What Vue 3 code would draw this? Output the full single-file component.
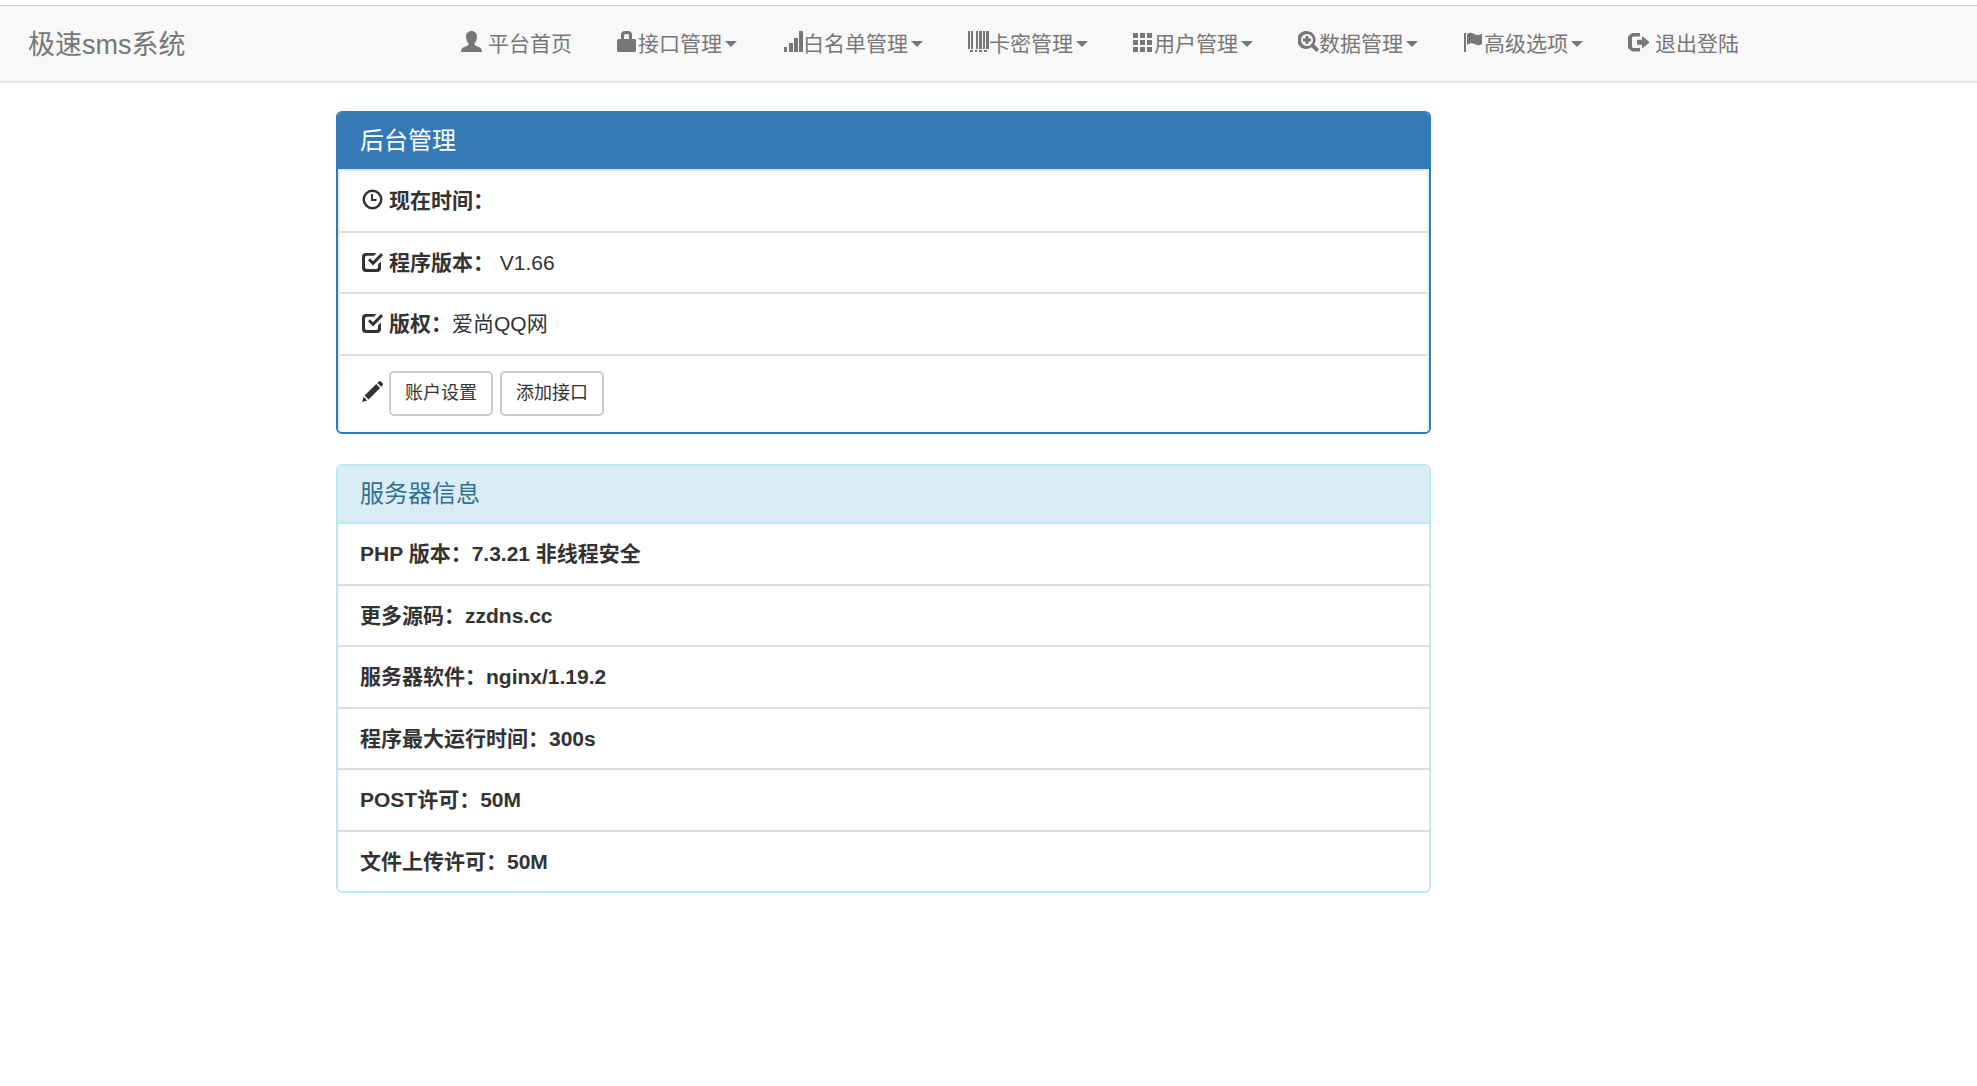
<template>
  <div class="page">
    <!-- ===== Navbar ===== -->
    <header class="navbar">
      <a class="brand" href="#">极速sms系统</a>
      <nav>
        <ul class="nav">
          <li v-for="item in menu" :key="item.label">
            <a href="#" :class="{ spaced: !item.dropdown }">
              <svg class="icon" viewBox="0 0 21 21" aria-hidden="true"><path :d="icons[item.icon]" /></svg>
              <span>{{ item.label }}</span>
              <i v-if="item.dropdown" class="caret"></i>
            </a>
          </li>
        </ul>
      </nav>
    </header>

    <main class="content">
      <!-- ===== 后台管理 ===== -->
      <section class="panel primary">
        <h3 class="heading">后台管理</h3>
        <ul class="list">
          <li v-for="row in site" :key="row.label">
            <svg class="icon" viewBox="0 0 21 21" aria-hidden="true"><path :d="icons[row.icon]" /></svg>
            <b>{{ row.label }}：</b>{{ row.value }}
          </li>
          <li class="tools">
            <svg class="icon" viewBox="0 0 21 21" aria-hidden="true"><path :d="icons.pencil" /></svg>
            <button v-for="name in actions" :key="name" type="button" class="btn">{{ name }}</button>
          </li>
        </ul>
      </section>

      <!-- ===== 服务器信息 ===== -->
      <section class="panel info">
        <h3 class="heading">服务器信息</h3>
        <ul class="list">
          <li v-for="row in server" :key="row.label">
            <b>{{ row.label }}：{{ row.value }}</b>
          </li>
        </ul>
      </section>
    </main>
  </div>
</template>

<script setup>
const menu = [
  { label: '平台首页', icon: 'user' },
  { label: '接口管理', icon: 'lock', dropdown: true },
  { label: '白名单管理', icon: 'signal', dropdown: true },
  { label: '卡密管理', icon: 'barcode', dropdown: true },
  { label: '用户管理', icon: 'grid', dropdown: true },
  { label: '数据管理', icon: 'zoom', dropdown: true },
  { label: '高级选项', icon: 'flag', dropdown: true },
  { label: '退出登陆', icon: 'logout' },
]

const site = [
  { label: '现在时间', icon: 'time', value: '' },
  { label: '程序版本', icon: 'check', value: '\u00a0V1.66' },
  { label: '版权', icon: 'check', value: '爱尚QQ网' },
]

const actions = ['账户设置', '添加接口']

const server = [
  { label: 'PHP 版本', value: '7.3.21 非线程安全' },
  { label: '更多源码', value: 'zzdns.cc' },
  { label: '服务器软件', value: 'nginx/1.19.2' },
  { label: '程序最大运行时间', value: '300s' },
  { label: 'POST许可', value: '50M' },
  { label: '文件上传许可', value: '50M' },
]

const icons = {
  user: 'M10.5 0C14.2 0 16 2.5 16 5.6c0 2.6-.9 5-2.2 6.3-.6.7-.6 2 .4 2.6 2 1.1 5.2 1.8 6.2 3.4.5.8.6 2 .6 3.1H0c0-1.1.1-2.3.6-3.1 1-1.6 4.2-2.3 6.2-3.4 1-.6 1-1.9.4-2.6C5.9 10.6 5 8.2 5 5.6 5 2.5 6.8 0 10.5 0z',
  lock: 'M4 8V4a4 4 0 0 1 4-4h3a4 4 0 0 1 4 4v4h2.5a1.5 1.5 0 0 1 1.5 1.5v10a1.5 1.5 0 0 1-1.5 1.5h-16A1.5 1.5 0 0 1 0 19.5v-10A1.5 1.5 0 0 1 1.5 8zM7 8h5V4.5A1.5 1.5 0 0 0 10.5 3h-2A1.5 1.5 0 0 0 7 4.5z',
  signal: 'M2 16h3v5H2zM7 12h4v9H7zM12 7h4v14h-4zM17 0h4v21h-4z',
  barcode: 'M0 0h2v18H0zM3 0h2v18H3zM8 0h2v18H8zM11 0h3v18h-3zM15 0h2v18h-2zM18 0h3v18h-3zM2 19h3v2H2zM7 19h2v2H7zM11 19h3v2h-3zM16 19h3v2h-3z',
  grid: 'M0 2h5v5H0zM7 2h5v5H7zM14 2h5v5h-5zM0 9h5v5H0zM7 9h5v5H7zM14 9h5v5h-5zM0 16h5v5H0zM7 16h5v5H7zM14 16h5v5h-5z',
  zoom: 'M9 0a9 9 0 0 1 7.4 13.5l4.6 4.7-2.5 2.8-5-4.8A9 9 0 1 1 9 0zM9 3a6 6 0 1 0 0 12A6 6 0 0 0 9 3zM7.5 5h3v2.5H13v3h-2.5V13h-3v-2.5H5v-3h2.5z',
  flag: 'M1 2h2v19H1zM4 3c2-1.6 5-1.5 7 0s5 1.2 8 0v10c-2.5 1.7-5.5 1.5-7.5.1s-4.5-1.4-7.5.9z',
  logout: 'M4 2h8v3.5H5.5A1.5 1.5 0 0 0 4 7v8.5A1.5 1.5 0 0 0 5.5 17H12v3.5H4L0 17V5.5zM14 5l8 6.3-8 6.2v-3.7H9V8.7h5z',
  time: 'M10.5.5a10 10 0 1 1 0 20 10 10 0 0 1 0-20zM10.5 3a7.5 7.5 0 1 0 0 15 7.5 7.5 0 0 0 0-15zM9 5h2v5h3.5v2H9z',
  check: 'M4 2h10.5L12 4.7H5a2 2 0 0 0-2 2V16a2 2 0 0 0 2 2h9a2 2 0 0 0 2-2v-2.5l3-3V17a4 4 0 0 1-4 4H4a4 4 0 0 1-4-4V6a4 4 0 0 1 4-4zM6 9.2l2-1.9 3 3L19 2l2 2.2-10 10.3z',
  pencil: 'M16.8.4a1.5 1.5 0 0 1 2 0l1.9 1.9a1.5 1.5 0 0 1 0 2l-1.5 1.5-3.9-3.9zM14.2 3l3.9 3.9L6.5 18.5l-3.9-3.9zM1.7 15.8l3.6 3.6L0 21z',
}
</script>

<style>
body {
  background: #fff;
}
</style>

<style scoped>
.page {
  padding-top: 5px;
  font-family: "Liberation Sans", "Noto Sans CJK SC", sans-serif;
  font-size: 21px;
  line-height: 30px;
  color: #333;
}

/* navbar */
.navbar {
  display: flex;
  align-items: center;
  height: 75px;
  padding: 0 28px;
  background: #f8f8f8;
  border-top: 1px solid #ccc;
  border-bottom: 2px solid #e2e2e2;
}
.brand {
  flex: 0 0 433px;
  padding-top: 2px;
  color: #777;
  font-size: 27px;
  text-decoration: none;
}
.nav {
  display: flex;
  gap: 45px;
  margin: 0;
  padding: 0;
  list-style: none;
}
.nav a {
  display: flex;
  align-items: center;
  color: #777;
  text-decoration: none;
  white-space: nowrap;
}
.nav a.spaced {
  gap: 6px;
}
.icon {
  flex: none;
  width: 21px;
  height: 21px;
  margin-bottom: 4px;
  fill: currentColor;
  fill-rule: evenodd;
}
.caret {
  margin-left: 3px;
  border: 6px solid transparent;
  border-top-color: currentColor;
  border-bottom: 0;
}

/* panels */
.content {
  display: grid;
  grid-template-columns: 336fr 1095fr 546fr;
  row-gap: 30px;
  padding: 28px 0;
}
.panel {
  grid-column: 2;
  border: 2px solid;
  border-radius: 6px;
  overflow: hidden;
}
.heading {
  margin: 0;
  padding: 13px 22px;
  font-size: 24px;
  font-weight: 400;
}
.list {
  margin: 0;
  padding: 0;
  list-style: none;
}
.list li {
  display: flex;
  align-items: center;
  padding: 15px 22px;
  border-top: 2px solid #ddd;
}
.list li:nth-child(even) {
  padding-bottom: 14px;
}
.list .icon {
  margin-right: 6px;
}
.primary {
  border-color: #337ab7;
}
.primary .heading {
  background: #337ab7;
  color: #fff;
}
.primary .list {
  border: solid #e1edf7;
  border-width: 0 2px;
}
.primary li:first-child {
  border-top-color: #d6e6f4;
}
.info {
  border-color: #bce8f1;
}
.info .heading {
  background: #d9edf7;
  color: #31708f;
}
.info li:first-child {
  border-top-color: #bce8f1;
}
.tools .icon {
  margin-bottom: 6px;
}
.btn {
  margin: 0 7px 2px 0;
  padding: 6px 14px;
  background: #fff;
  border: 2px solid #ccc;
  border-radius: 5px;
  color: #333;
  font-family: inherit;
  font-size: 18px;
  line-height: 29px;
  cursor: pointer;
}
</style>
